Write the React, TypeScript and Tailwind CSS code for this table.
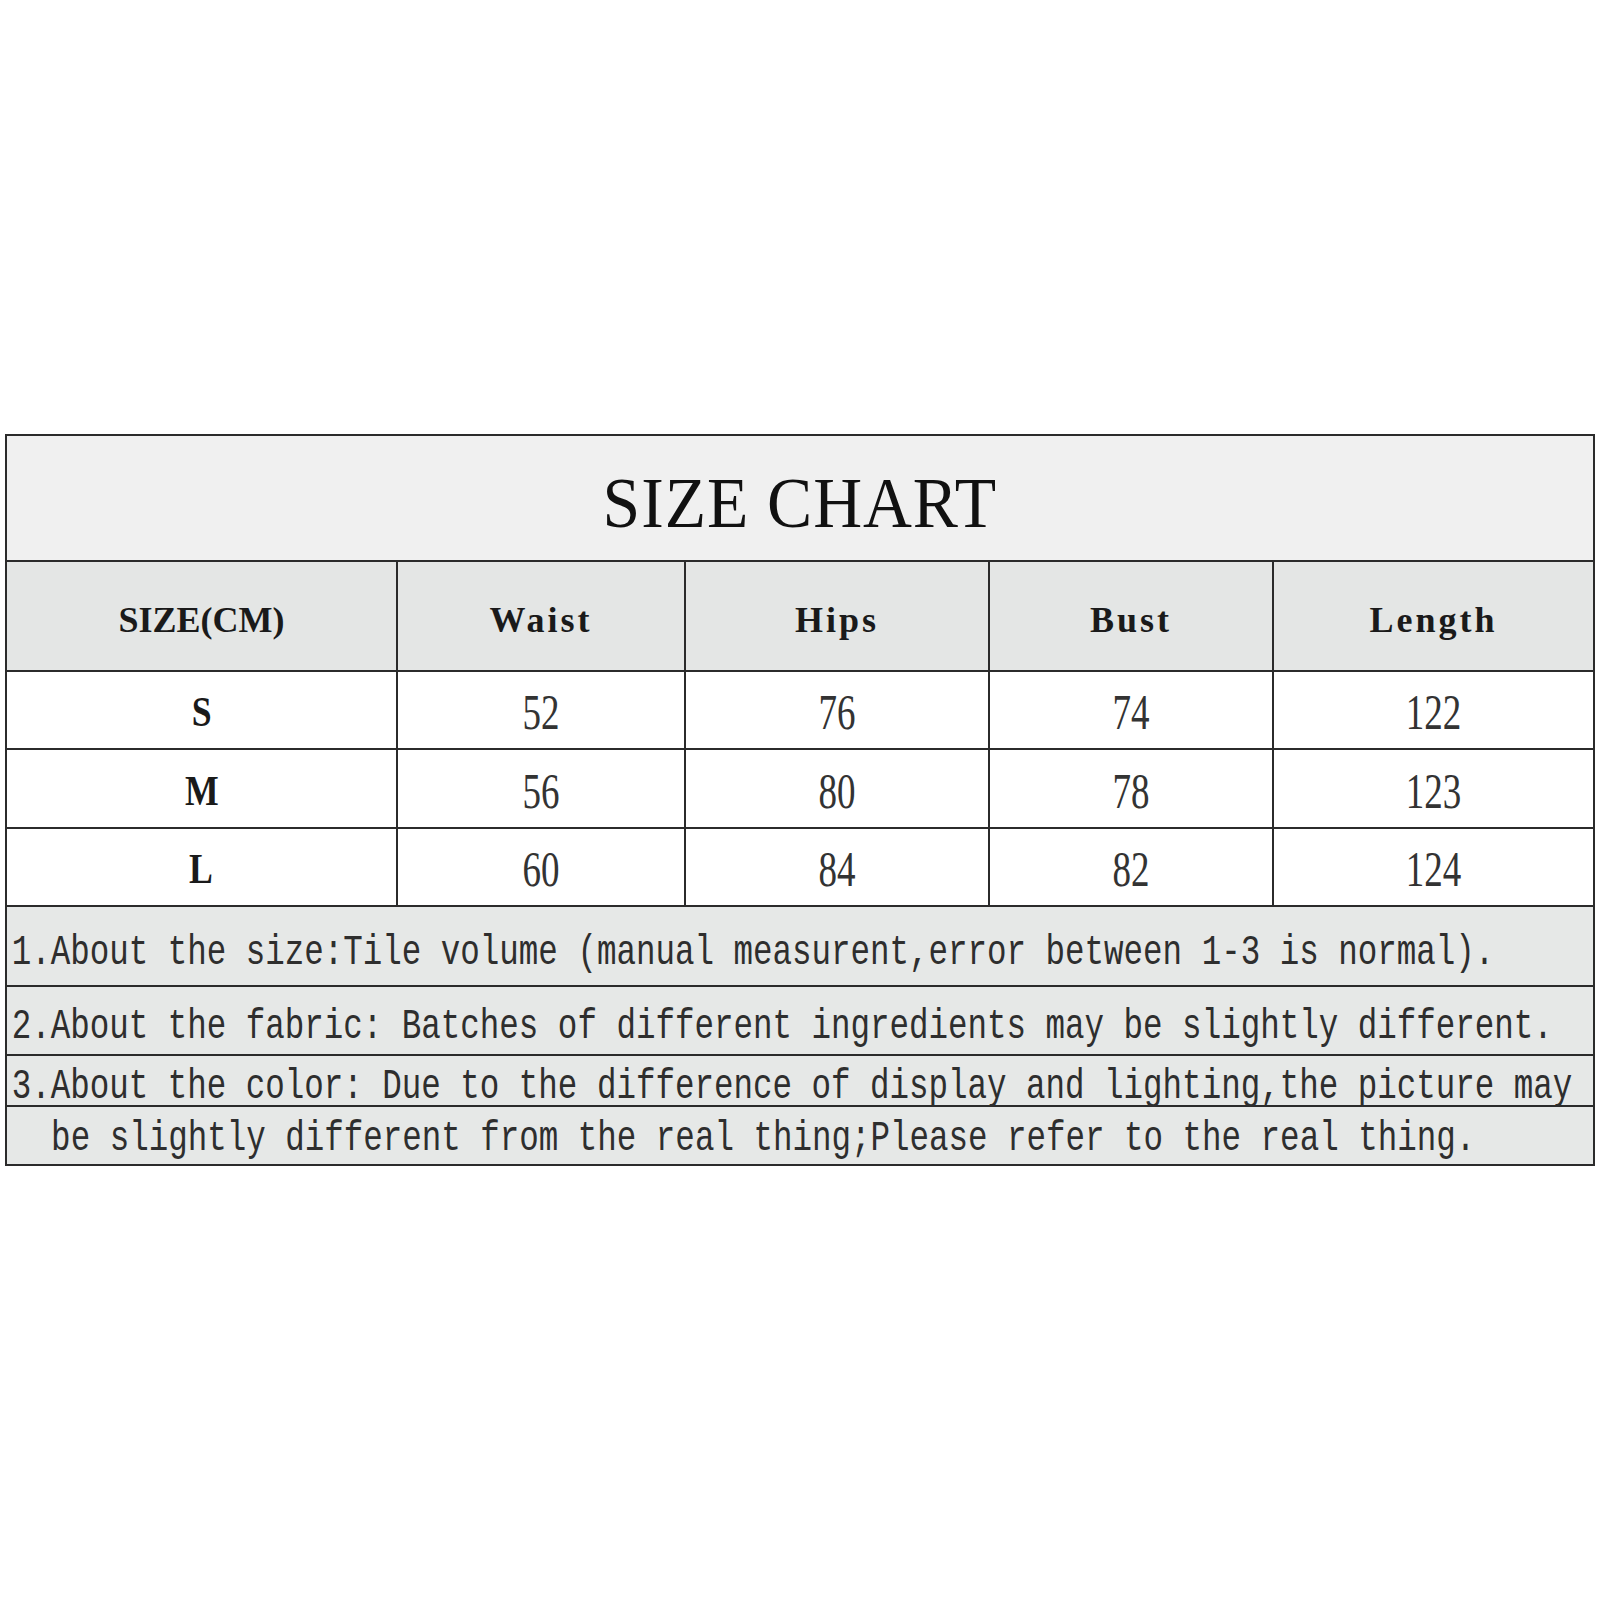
import React from "react";

const cols = "grid grid-cols-[389px_288px_304px_284px_1fr]";

const headers = ["Waist", "Hips", "Bust", "Length"];
const rows: [string, string[]][] = [
  ["S", ["52", "76", "74", "122"]],
  ["M", ["56", "80", "78", "123"]],
  ["L", ["60", "84", "82", "124"]],
];

function NoteLine({ text, indent = false }: { text: string; indent?: boolean }) {
  return (
    <div className="h-full flex items-center whitespace-nowrap">
      <span
        className={
          "inline-block origin-left scale-x-[0.774] text-[42px] leading-[36px] text-[#2e2e2e] [font-family:'Liberation_Mono',monospace] " +
          (indent ? "pl-[57px]" : "pl-[6px]")
        }
      >
        {text}
      </span>
    </div>
  );
}

export default function App() {
  return (
    <div className="w-full h-[1600px] bg-white pt-[434px] px-[5px] overflow-hidden">
      <div className="border-2 border-[#2b2b2b] w-[1590px]">
        {/* Title */}
        <div className="h-[126px] bg-[#f0f0f0] border-b-2 border-[#2b2b2b] flex items-center justify-center pt-[10px]">
          <span className="inline-block scale-x-[0.94] text-[72px] leading-none text-[#111] tracking-[1px] [font-family:'Liberation_Serif',serif]">
            SIZE CHART
          </span>
        </div>
        {/* Header */}
        <div className={cols + " h-[110px] bg-[#e4e6e5] border-b-2 border-[#2b2b2b]"}>
          <div className="flex items-center justify-center pt-[8px]">
            <span className="text-[36px] font-bold leading-none text-[#1a1a1a] [font-family:'Liberation_Serif',serif]">
              SIZE(CM)
            </span>
          </div>
          {headers.map((h) => (
            <div key={h} className="border-l-2 border-[#2b2b2b] flex items-center justify-center pt-[8px]">
              <span className="text-[36px] font-bold leading-none tracking-[3px] text-[#1a1a1a] [font-family:'Liberation_Serif',serif]">
                {h}
              </span>
            </div>
          ))}
        </div>
        {/* Data rows */}
        {rows.map(([size, vals], i) => (
          <div
            key={size}
            className={cols + " bg-white border-b-2 border-[#2b2b2b] " + (i === 1 ? "h-[79px]" : "h-[78px]")}
          >
            <div className="flex items-center justify-center pt-[4px]">
              <span className="inline-block scale-x-[0.85] text-[42px] font-bold leading-none text-[#1a1a1a] [font-family:'Liberation_Serif',serif]">
                {size}
              </span>
            </div>
            {vals.map((v, j) => (
              <div key={j} className="border-l-2 border-[#2b2b2b] flex items-center justify-center pt-[4px]">
                <span className="inline-block scale-x-[0.74] text-[50px] leading-none text-[#333] [font-family:'Liberation_Serif',serif]">
                  {v}
                </span>
              </div>
            ))}
          </div>
        ))}
        {/* Notes */}
        <div className="bg-[#e6e8e7]">
          <div className="h-[80px] border-b-2 border-[#2b2b2b] pt-[14px]">
            <NoteLine text="1.About the size:Tile volume (manual measurent,error between 1-3 is normal)." />
          </div>
          <div className="h-[69px] border-b-2 border-[#2b2b2b] pt-[12px]">
            <NoteLine text="2.About the fabric: Batches of different ingredients may be slightly different." />
          </div>
          <div className="h-[51px] border-b-2 border-[#2b2b2b] pt-[12px]">
            <NoteLine text="3.About the color: Due to the difference of display and lighting,the picture may" />
          </div>
          <div className="h-[57px] pt-[6px]">
            <NoteLine indent text="be slightly different from the real thing;Please refer to the real thing." />
          </div>
        </div>
      </div>
    </div>
  );
}
